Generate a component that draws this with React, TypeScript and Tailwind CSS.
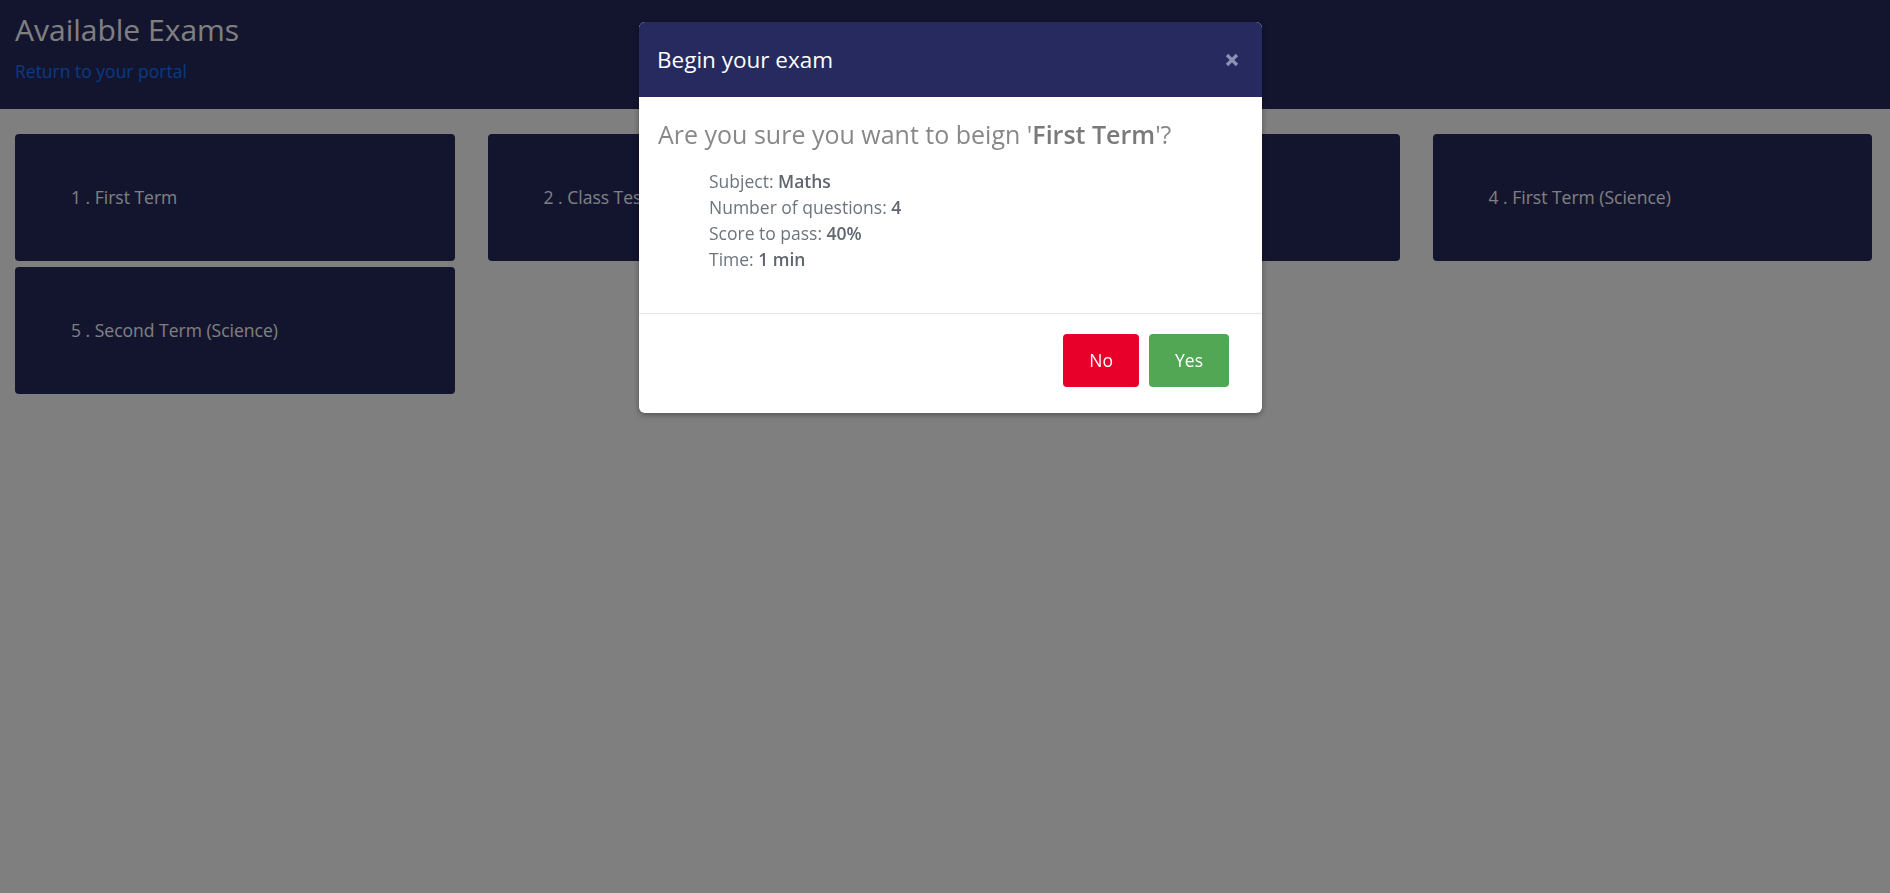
import { useState } from "react";

const exams = [
  "First Term",
  "Class Test",
  "Second Term",
  "First Term (Science)",
  "Second Term (Science)",
];

function ExamCard({ index, title }: { index: number; title: string }) {
  return (
    <div className="flex h-[127px] items-center rounded-[4px] bg-[#262a5f] px-[56px] pb-[2px] text-[17.5px] leading-[26px] text-white">
      {index} . {title}
    </div>
  );
}

function App() {
  const [open, setOpen] = useState(true);

  return (
    <div className="min-h-screen bg-white font-['Open_Sans',sans-serif]">
      <header className="h-[109px] bg-[#262a5f] px-[15px] pt-[12px]">
        <h1 className="text-[30px] leading-[36px] text-white">Available Exams</h1>
        <a href="#" className="mt-[10px] block text-[17.5px] leading-[26px] text-[#1574ff]">
          Return to your portal
        </a>
      </header>

      <main className="grid grid-cols-4 gap-x-[33px] gap-y-[6px] pl-[15px] pr-[18px] pt-[25px]">
        {exams.map((title, i) => (
          <ExamCard key={i} index={i + 1} title={title} />
        ))}
      </main>

      {open && (
        <>
          <div className="fixed inset-0 bg-black/50" />
          <div className="fixed left-[639px] top-[22px] w-[623px] overflow-hidden rounded-[6px] bg-white shadow-[0_2px_6px_rgba(0,0,0,0.35)]">
            <div className="flex items-center justify-between bg-[#262a5f] pb-[20px] pl-[18px] pr-[22px] pt-[21px]">
              <h4 className="text-[22.5px] leading-[34px] text-white">Begin your exam</h4>
              <button onClick={() => setOpen(false)} className="flex h-[16px] w-[16px] items-center justify-center">
                <svg width="14" height="14" viewBox="0 0 14 14">
                  <path d="M2 2L12 12M12 2L2 12" stroke="#8d90b2" strokeWidth="3.2" />
                </svg>
              </button>
            </div>

            <div className="px-[19px] pb-[40px] pt-[24px]">
              <h3 className="text-[25px] leading-[27.5px] text-[#888888]">
                Are you sure you want to beign '<span className="font-semibold text-[#7a7a7a]">First Term</span>'?
              </h3>
              <ul className="mt-[19px] pl-[51px] text-[17.5px] leading-[26.25px] text-[#6c757d]">
                <li>
                  Subject: <span className="font-semibold text-[#5f666e]">Maths</span>
                </li>
                <li>
                  Number of questions: <span className="font-semibold text-[#5f666e]">4</span>
                </li>
                <li>
                  Score to pass: <span className="font-semibold text-[#5f666e]">40%</span>
                </li>
                <li>
                  Time: <span className="font-semibold text-[#5f666e]">1 min</span>
                </li>
              </ul>
            </div>

            <div className="flex justify-end gap-[10px] border-t border-[#e5e5e5] pb-[26px] pr-[33px] pt-[20px]">
              <button className="flex h-[53px] items-center rounded-[4px] bg-[#e8002a] px-[26px] text-[17.5px] text-white">
                No
              </button>
              <button className="flex h-[53px] items-center rounded-[4px] bg-[#52a754] px-[26px] text-[17.5px] text-white">
                Yes
              </button>
            </div>
          </div>
        </>
      )}
    </div>
  );
}

export default App;
